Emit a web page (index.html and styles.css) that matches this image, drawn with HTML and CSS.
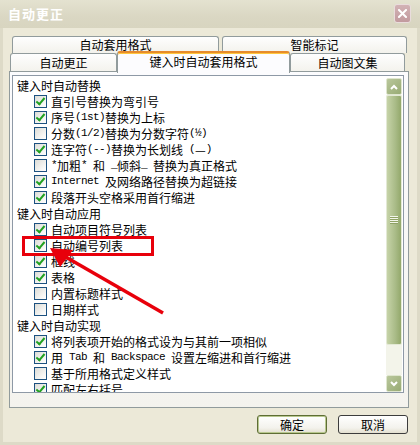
FILE: index.html
```html
<!doctype html>
<html lang="zh-cn">
  <head>
    <meta charset="utf-8">
    <title>自动更正</title>
    <link rel="stylesheet" href="styles.css">
  </head>
  <body>
    <div class="window">
      <div class="titlebar">
        <span class="title">自动更正</span>
        <span class="close">
          <svg width="9" height="9" viewBox="0 0 9 9"><path d="M1 1 L8 8 M8 1 L1 8" stroke="#fff" stroke-width="2" stroke-linecap="square"/></svg>
        </span>
      </div>

      <div class="tabs">
        <div class="tabrow back">
          <div class="tab t-style">自动套用格式</div>
          <div class="tab t-smart">智能标记</div>
        </div>
        <div class="tabrow front">
          <div class="tab t-auto">自动更正</div>
          <div class="tab sel">键入时自动套用格式</div>
          <div class="tab t-text">自动图文集</div>
        </div>
      </div>

      <div class="panel">
        <div class="listbox">
          <div class="items">
            <div class="row cat">键入时自动替换</div>
            <div class="row opt"><span class="cb on"></span>直引号替换为弯引号</div>
            <div class="row opt"><span class="cb on"></span>序号<span class="en">(1st)</span>替换为上标</div>
            <div class="row opt"><span class="cb"></span>分数<span class="en">(1/2)</span>替换为分数字符<span class="en">(½)</span></div>
            <div class="row opt"><span class="cb on"></span>连字符<span class="en">(--)</span>替换为长划线<span class="en"> (</span>—<span class="en">)</span></div>
            <div class="row opt"><span class="cb"></span><span class="en">*</span>加粗<span class="en">* </span>和<span class="en"> _</span>倾斜<span class="en">_ </span>替换为真正格式</div>
            <div class="row opt"><span class="cb on"></span><span class="en">Internet </span>及网络路径替换为超链接</div>
            <div class="row opt"><span class="cb on"></span>段落开头空格采用首行缩进</div>
            <div class="row cat">键入时自动应用</div>
            <div class="row opt"><span class="cb on"></span>自动项目符号列表</div>
            <div class="row opt"><span class="cb on"></span>自动编号列表</div>
            <div class="row opt"><span class="cb on"></span>框线</div>
            <div class="row opt"><span class="cb on"></span>表格</div>
            <div class="row opt"><span class="cb"></span>内置标题样式</div>
            <div class="row opt"><span class="cb"></span>日期样式</div>
            <div class="row cat">键入时自动实现</div>
            <div class="row opt"><span class="cb on"></span>将列表项开始的格式设为与其前一项相似</div>
            <div class="row opt"><span class="cb on"></span>用<span class="en"> Tab </span>和<span class="en"> Backspace </span>设置左缩进和首行缩进</div>
            <div class="row opt"><span class="cb"></span>基于所用格式定义样式</div>
            <div class="row opt"><span class="cb on"></span>匹配左右括号</div>
          </div>
          <div class="scrollbar">
            <div class="sb-btn">
              <svg width="8" height="6" viewBox="0 0 8 6"><path d="M1 5 L4 2 L7 5" fill="none" stroke="#fff" stroke-width="2"/></svg>
            </div>
            <div class="sb-track">
              <div class="sb-thumb"><span class="grip"></span></div>
            </div>
            <div class="sb-btn">
              <svg width="8" height="6" viewBox="0 0 8 6"><path d="M1 1 L4 4 L7 1" fill="none" stroke="#fff" stroke-width="2"/></svg>
            </div>
          </div>
        </div>
      </div>

      <div class="buttons">
        <button class="btn default">确定</button>
        <button class="btn">取消</button>
      </div>

      <!-- red markup drawn over the screenshot -->
      <svg class="annot" width="420" height="445" viewBox="0 0 420 445">
        <rect x="23.5" y="237.5" width="129" height="17" fill="none" stroke="#e8000b" stroke-width="3"/>
        <line x1="163" y1="313" x2="64" y2="256" stroke="#e8000b" stroke-width="3.5"/>
        <polygon points="50,248 73,250 60,267" fill="#e8000b"/>
      </svg>
    </div>
  </body>
</html>
```

FILE: styles.css
```css
* { box-sizing: border-box; }
html, body { margin: 0; }
body { width: 420px; height: 445px; overflow: hidden; background: #ece9d8; font-family: "Noto Sans CJK SC", sans-serif; font-size: 12px; color: #000; }

.window { position: relative; height: 445px; box-shadow: inset 3px 0 #dddac7, inset -3px 0 #dddac7, inset 0 -3px #dddac7; }

/* title bar (inactive) */
.titlebar { height: 28px; display: flex; align-items: center; justify-content: space-between; padding: 0 9px 0 8px; background: linear-gradient(#e4e2d0, #dad7c3 60%, #d8d5c0); }
.titlebar .title { color: #fff; font-weight: bold; font-size: 13px; line-height: 28px; letter-spacing: 1px; }
.titlebar .close { width: 17px; height: 19px; margin-top: -2px; display: flex; align-items: center; justify-content: center; border: 1px solid #e9dcdc; border-radius: 3px; background: linear-gradient(#d2b2b5, #c29a9e); }

/* tabs */
.tabs { margin-top: 8px; }
.tabrow { display: flex; }
.tabrow.back { height: 17px; padding-left: 12px; gap: 3px; }
.tabrow.front { height: 19px; padding-left: 10px; }
.tab { text-align: center; border: 1px solid #919b9c; border-bottom: none; border-radius: 3px 3px 0 0; background: linear-gradient(#fefefe, #f3f2ec); white-space: nowrap; }
.tabrow.back .tab { height: 17px; line-height: 16px; }
.tabrow.front .tab { height: 19px; line-height: 18px; }
.t-style { width: 207px; }
.t-smart { width: 185px; }
.t-auto { width: 107px; }
.t-text { width: 115px; }
.tab.sel { position: relative; z-index: 2; width: 173px; height: 22px; margin-top: -2px; line-height: 20px; border-top: 2px solid #e68b2c; background: #fcfcfe; box-shadow: inset 0 1px #ffc73c; }
.tabrow.front .tab.sel { height: 22px; }

.panel { position: relative; z-index: 1; width: 400px; height: 337px; margin: -1px 0 0 9px; padding: 3px 4px 0 2px; border: 1px solid #919b9c; background: linear-gradient(#fcfcfe, #f4f3ee); }

/* list of options */
.listbox { display: flex; height: 318px; border: 1px solid #8e99a6; background: #fff; }
.items { flex: 1; padding-top: 1px; overflow: hidden; }
.row { display: flex; align-items: center; height: 16px; white-space: nowrap; }
.row.cat { padding-left: 4px; }
.row.opt { padding-left: 21px; }
.en { font-family: "Liberation Mono", monospace; font-size: 11px; letter-spacing: -0.6px; white-space: pre; }

.cb { position: relative; flex: none; width: 13px; height: 13px; margin-right: 4px; border: 1px solid #1c5180; background: linear-gradient(135deg, #dcdcd7, #f6f6f4 70%, #fff); }
.cb.on::after { content: ""; position: absolute; left: 3px; top: 0px; width: 3px; height: 7px; border: solid #21a121; border-width: 0 2.5px 2.5px 0; transform: rotate(40deg); }

.scrollbar { display: flex; flex-direction: column; width: 16px; margin: 2px 1px 0 0; }
.sb-btn { height: 17px; display: flex; align-items: center; justify-content: center; border: 1px solid #dfe6cf; border-radius: 2px; background: linear-gradient(135deg, #b9c79c, #98ab74); }
.sb-track { flex: 1; background: #f3f4ea; }
.sb-thumb { height: 250px; display: flex; align-items: center; justify-content: center; border: 1px solid #e3e9d5; border-radius: 2px; background: linear-gradient(90deg, #c6d3a8, #a9bb87 60%, #93a86b); }
.sb-thumb .grip { width: 8px; height: 8px; background: repeating-linear-gradient(#f2f5ea 0 1px, #8fa266 1px 2px); }

/* dialog buttons */
.buttons { display: flex; justify-content: flex-end; gap: 11px; margin-top: 7px; padding-right: 12px; }
.btn { width: 70px; height: 19px; padding: 0; font-family: inherit; font-size: 12px; color: #000; border: 1px solid #3c3c3c; border-radius: 3px; background: linear-gradient(#fff, #f3f2ec 70%, #e3e0d0); }
.btn.default { border-color: #5e6d35; box-shadow: inset 0 0 0 1px #b8c88e; }

.annot { position: absolute; z-index: 5; left: 0; top: 0; pointer-events: none; }
```
